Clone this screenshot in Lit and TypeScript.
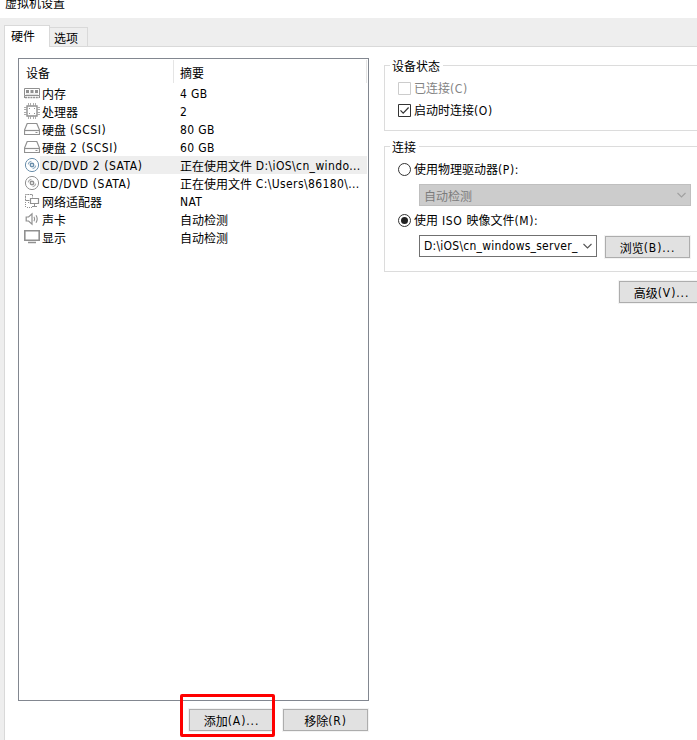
import { LitElement, html, css, svg } from "lit";
import { customElement, property } from "lit/decorators.js";
import { classMap } from "lit/directives/class-map.js";

/** Label whose Latin runs and CJK runs are set in separate faces. */
@customElement("ui-text")
class UiText extends LitElement {
  @property() text = "";
  static styles = css`
    :host { display: inline-block; white-space: pre; font: 12px/18px "Noto Sans CJK SC", sans-serif; }
    .l { font-family: "DejaVu Sans Condensed", "DejaVu Sans", sans-serif; font-stretch: condensed; font-size: 12px; line-height: 1; letter-spacing: var(--track, 0.38px); }
    .c { position: relative; top: 0.5px; }
  `;
  render() {
    const runs = this.text.match(/[\x00-\x7f]+|[^\x00-\x7f]+/g) ?? [];
    return runs.map((r) => html`<span class=${r.charCodeAt(0) < 128 ? "l" : "c"}>${r}</span>`);
  }
}

const disc = svg`<circle cx="8" cy="8" r="6.6"/><circle cx="8" cy="8" r="1.7" stroke-width="1.5"/><path d="M4.2 7.4A4 4 0 0 1 7.4 4.2M11.8 8.6A4 4 0 0 1 8.6 11.8" stroke-width="1.1" opacity=".75"/>`;
const icons: Record<string, unknown> = {
  memory: svg`<path d="M.5 3.5h15v7H.5z"/><path d="M2 5h3v3H2zM6.5 5h3v3h-3zM11 5h3v3h-3z" fill="currentColor" stroke="none"/><path d="M.5 10.5v2.5M15.5 10.5v2.5"/><path d="M1 12.5h14" stroke-dasharray="2 .7" stroke-width="1.4"/><path d="M2 9.2h12" opacity=".4"/>`,
  cpu: svg`<path d="M3 3h10v10H3z" stroke-width="1.4"/><path d="M4.5 0v2.5M6.5 0v2.5M9.5 0v2.5M11.5 0v2.5M4.5 13.5v2.5M6.5 13.5v2.5M9.5 13.5v2.5M11.5 13.5v2.5M0 4.5h2.5M0 6.5h2.5M0 9.5h2.5M0 11.5h2.5M13.5 4.5h2.5M13.5 6.5h2.5M13.5 9.5h2.5M13.5 11.5h2.5" opacity=".75"/><path d="M5 5h1v1H5zM10 5h1v1h-1zM5 10h1v1H5zM10 10h1v1h-1z" fill="currentColor" stroke="none"/>`,
  disk: svg`<path d="M3.2 2.5h9.6l2.7 6.5v4.5H.5V9z" stroke-width="1.2"/><path d="M.5 9.5h15" stroke-width="1.2"/><path d="M11.5 11.5h2"/>`,
  disc,
  net: svg`<path d="M1.5 7.5v-6h7v3" stroke-dasharray="2 .6"/><path d="M1.5 7.5h4"/><path d="M6.5 5.5h8v5h-8z" fill="#fff" stroke-width="1.2"/><path d="M10.5 11v2M8 13.5h5"/><path d="M1.5 9v5.5M3 14.5h5M4.5 9v2" stroke-dasharray="1 1"/>`,
  sound: svg`<path d="M2.2 6h2.4L8 2.8v10.4L4.6 10H2.2z" stroke-width="1.2"/><path d="M10 5.8q1.3 2.2 0 4.4M12 4.3q2.4 3.7 0 7.4" stroke-width="1.1"/>`,
  display: svg`<path d="M.8 1.8h14.4v9.4H.8z" stroke-width="1.6"/><path d="M4 13.5h8" stroke-width="1.5"/>`,
};

interface Device { icon: string; name: string; summary: string; selected?: boolean }
const devices: Device[] = [
  { icon: "memory", name: "内存", summary: "4 GB" },
  { icon: "cpu", name: "处理器", summary: "2" },
  { icon: "disk", name: "硬盘 (SCSI)", summary: "80 GB" },
  { icon: "disk", name: "硬盘 2 (SCSI)", summary: "60 GB" },
  { icon: "disc", name: "CD/DVD 2 (SATA)", summary: "正在使用文件 D:\\iOS\\cn_windo...", selected: true },
  { icon: "disc", name: "CD/DVD (SATA)", summary: "正在使用文件 C:\\Users\\86180\\..." },
  { icon: "net", name: "网络适配器", summary: "NAT" },
  { icon: "sound", name: "声卡", summary: "自动检测" },
  { icon: "display", name: "显示", summary: "自动检测" },
];

@customElement("device-list")
class DeviceList extends LitElement {
  static styles = css`
    :host { display: block; box-sizing: border-box; width: 351px; height: 643px; border: 1px solid #828790; background: #fff; }
    .head { display: flex; height: 25px; padding-top: 1px; box-sizing: border-box; }
    .head ui-text { margin-top: 3px; }
    .h1 { width: 147px; padding-left: 7px; height: 23px; border-right: 1px solid #e5e5e5; }
    .h2 { width: 186px; padding-left: 6px; height: 23px; border-right: 1px solid #e5e5e5; }
    .row { display: flex; height: 18px; padding: 0 1px 0 5px; }
    svg { width: 16px; height: 16px; margin-top: 1px; color: #909090; fill: none; stroke: currentColor; flex: none; }
    .blue { color: #6a8fac; }
    .cells { flex: 1; display: flex; padding-left: 2px; }
    .sel { background: #eee; }
    .name { width: 138px; --track: 0.57px; }
  `;
  render() {
    return html`
      <div class="head"><div class="h1"><ui-text text="设备"></ui-text></div><div class="h2"><ui-text text="摘要"></ui-text></div></div>
      ${devices.map(({ icon, name, summary, selected = false }) => html`
        <div class="row">
          <svg viewBox="0 0 16 16" class=${classMap({ blue: selected })}>${icons[icon]}</svg>
          <div class=${classMap({ cells: true, sel: selected })}>
            <ui-text class="name" .text=${name}></ui-text><ui-text .text=${summary}></ui-text>
          </div>
        </div>`)}`;
  }
}

@customElement("app-root")
class AppRoot extends LitElement {
  static styles = css`
    :host { display: flex; flex-direction: column; width: 697px; height: 740px; overflow: hidden; background: #eee; color: #000; }
    .title { height: 18px; background: #fff; overflow: hidden; padding-left: 5px; display: flex; flex: none; }
    .title ui-text { margin-top: -7px; }
    .tabs { display: flex; align-items: flex-end; height: 29px; padding-left: 4px; margin-bottom: -1px; position: relative; flex: none; }
    .tab { box-sizing: border-box; border: 1px solid #d9d9d9; height: 20px; width: 39px; margin-left: -1px; padding-left: 4px; }
    .tab ui-text { display: block; margin-top: 0; }
    .tab.on { height: 22px; width: 46px; margin: 0; background: #fff; border-bottom: 0; padding-left: 6px; }
    .panel { flex: 1; margin-left: 4px; border: 1px solid #d9d9d9; border-width: 1px 0 0 1px; background: #fff; display: flex; padding: 11px 0 0 13px; gap: 15px; }
    .left { position: relative; flex: none; width: 351px; }
    .actions { display: flex; justify-content: flex-end; gap: 9px; padding: 8px 1px 0 0; }
    .btn { box-sizing: border-box; width: 85px; height: 22px; border: 1px solid #adadad; background: #e1e1e1; text-align: center; box-shadow: 0 0 0 1px #f3f3f3; flex: none; --track: 0.9px; }
    .btn ui-text { display: block; margin-top: 1px; }
    .mark { position: absolute; left: 162px; top: 636px; width: 89px; height: 37px; border: 3px solid #fe0000; border-radius: 2px; }
    .right { flex: 1; padding-top: 7px; min-width: 0; }
    .group { box-sizing: border-box; border: 1px solid #dcdcdc; border-right: 0; padding-left: 13px; }
    .g1 { height: 66px; margin-bottom: 15px; }
    .g2 { height: 126px; }
    .legend { display: block; width: max-content; height: 18px; margin: -10px 0 0 -8px; background: #fff; padding: 0 3px 0 2px; }
    .opt { display: flex; align-items: center; gap: 3px; height: 18px; --track: 0.6px; }
    .opt.off { color: #838383; }
    .opt svg { width: 13px; height: 13px; flex: none; fill: #fff; stroke: #333; }
    .opt.off svg { stroke: #ccc; }
    .opt ui-text { margin-top: -1px; }
    .opt + .opt { margin-top: 4px; }
    .g1 .opt:nth-of-type(1) { margin-top: 5px; }
    .g2 .opt { margin-top: 5px; }
    .g2 .second { margin-top: 5px; }
    .combo { box-sizing: border-box; height: 22px; border: 1px solid #707070; background: #fff; display: flex; justify-content: space-between; align-items: center; padding: 0 3px 0 4px; flex: none; --track: 0.25px; }
    .combo ui-text { margin-top: -2px; }
    .combo svg { width: 11px; height: 7px; fill: none; stroke: #555; flex: none; }
    .combo.off { width: 272px; margin: 6px 0 0 21px; background: #ccc; border-color: #bfbfbf; color: #7c7c7c; }
    .combo.off ui-text { margin-top: 1px; }
    .combo.off svg { stroke: #a0a0a0; }
    .combo.iso { width: 178px; }
    .line { display: flex; gap: 8px; margin: 6px 0 0 21px; }
    .line .btn { margin-top: 1px; }
    .adv { margin: 9px 0 0 235px; }
  `;
  render() {
    const chevron = html`<svg viewBox="0 0 11 7"><path d="M1.5 1l4 4 4-4" stroke-width="1.1"/></svg>`;
    return html`
      <div class="title"><ui-text text="虚拟机设置"></ui-text></div>
      <div class="tabs"><div class="tab on"><ui-text text="硬件"></ui-text></div><div class="tab"><ui-text text="选项"></ui-text></div></div>
      <div class="panel">
        <div class="left">
          <device-list></device-list>
          <div class="actions">
            <div class="btn"><ui-text text="添加(A)..."></ui-text></div>
            <div class="btn"><ui-text text="移除(R)"></ui-text></div>
          </div>
          <div class="mark"></div>
        </div>
        <div class="right">
          <div class="group g1">
            <ui-text class="legend" text="设备状态"></ui-text>
            <div class="opt off"><svg viewBox="0 0 13 13"><path d="M.5.5h12v12H.5z"/></svg><ui-text text="已连接(C)"></ui-text></div>
            <div class="opt"><svg viewBox="0 0 13 13"><path d="M.5.5h12v12H.5z"/><path d="M2.5 6.3l2.7 2.8 5.4-5.6" stroke-width="1.2"/></svg><ui-text text="启动时连接(O)"></ui-text></div>
          </div>
          <div class="group g2">
            <ui-text class="legend" text="连接"></ui-text>
            <div class="opt"><svg viewBox="0 0 13 13"><circle cx="6.5" cy="6.5" r="6"/></svg><ui-text text="使用物理驱动器(P):"></ui-text></div>
            <div class="combo off"><ui-text text="自动检测"></ui-text>${chevron}</div>
            <div class="opt second"><svg viewBox="0 0 13 13"><circle cx="6.5" cy="6.5" r="6"/><circle cx="6.5" cy="6.5" r="3.5" fill="#222" stroke="none"/></svg><ui-text text="使用 ISO 映像文件(M):"></ui-text></div>
            <div class="line">
              <div class="combo iso"><ui-text text="D:\\iOS\\cn_windows_server_"></ui-text>${chevron}</div>
              <div class="btn"><ui-text text="浏览(B)..."></ui-text></div>
            </div>
          </div>
          <div class="btn adv"><ui-text text="高级(V)..."></ui-text></div>
        </div>
      </div>`;
  }
}
